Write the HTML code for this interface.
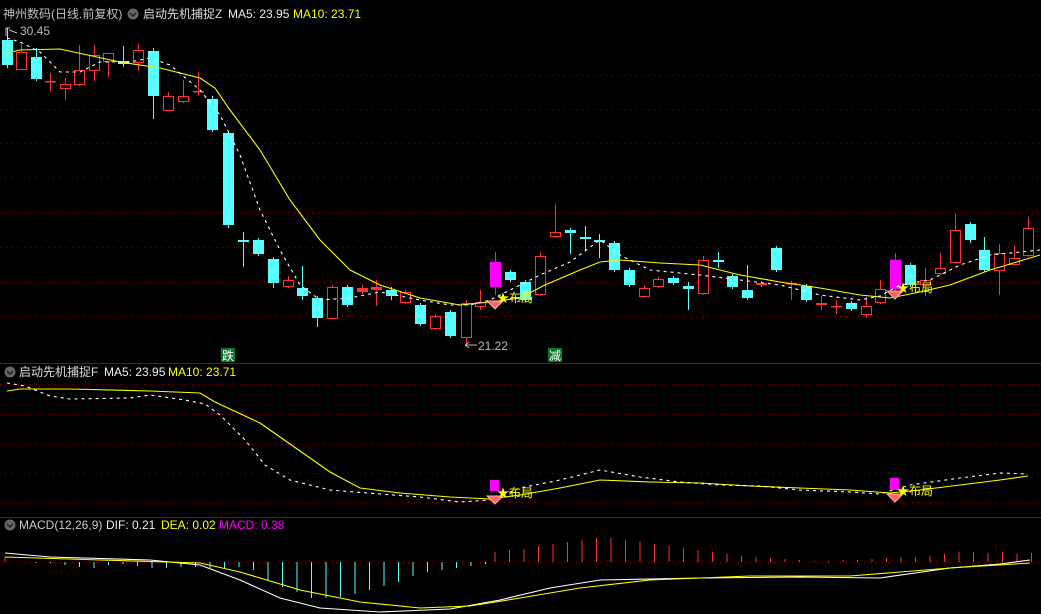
<!DOCTYPE html>
<html><head><meta charset="utf-8"><style>
html,body{margin:0;padding:0;background:#000;width:1041px;height:614px;overflow:hidden}
svg{display:block}
text{font-family:"Liberation Sans","Noto Sans CJK SC",sans-serif;font-size:12px}
</style></head><body>
<svg id="s" width="1041" height="614" xmlns="http://www.w3.org/2000/svg">
<g id="grid"></g>
<line x1="0" y1="363.5" x2="1041" y2="363.5" stroke="#a00000" stroke-width="1"/>
<line x1="0" y1="517.5" x2="1041" y2="517.5" stroke="#a00000" stroke-width="1"/>
<g id="c"></g>
<g id="l"></g>
<text x="3" y="18" fill="#c0c0c0">神州数码(日线.前复权)</text>
<circle cx="133" cy="14" r="5.5" fill="#666"/><path d="M130 13l3 3 3-3" stroke="#222" fill="none" stroke-width="1.5"/>
<text x="143" y="18" fill="#ddd">启动先机捕捉Z</text>
<text x="228" y="18" fill="#eee">MA5: 23.95</text>
<text x="293" y="18" fill="#ff0">MA10: 23.71</text>
<text x="20" y="35" fill="#bbb">30.45</text>
<path d="M6 36v-8h4M9 30l8 3" stroke="#bbb" fill="none"/>
<text x="478" y="350" fill="#bbb">21.22</text>
<path d="M465 345h12M465 345l4-3M465 345l4 3" stroke="#bbb" fill="none"/>
<rect x="221" y="348" width="14" height="14" fill="#0a7a2a"/><text x="222" y="360" fill="#fff">跌</text>
<rect x="548" y="348" width="14" height="14" fill="#0a7a2a"/><text x="549" y="360" fill="#fff">减</text>
<circle cx="10" cy="372" r="5.5" fill="#666"/><path d="M7 371l3 3 3-3" stroke="#222" fill="none" stroke-width="1.5"/>
<text x="19" y="376" fill="#ddd">启动先机捕捉F</text>
<text x="104" y="376" fill="#eee">MA5: 23.95</text>
<text x="168" y="376" fill="#ff0">MA10: 23.71</text>
<circle cx="10" cy="525" r="5.5" fill="#666"/><path d="M7 524l3 3 3-3" stroke="#222" fill="none" stroke-width="1.5"/>
<text x="19" y="529" fill="#ccc">MACD(12,26,9)</text>
<text x="106" y="529" fill="#eee">DIF: 0.21</text>
<text x="161" y="529" fill="#ff0">DEA: 0.02</text>
<text x="219" y="529" fill="#f0f">MACD: 0.38</text>
</svg>
<script>
var ns="http://www.w3.org/2000/svg";
function el(p,t,a){var e=document.createElementNS(ns,t);for(var k in a)e.setAttribute(k,a[k]);document.getElementById(p).appendChild(e);return e;}
[75,109,143,177,212,247,282,316,384,414,444,473,502,562].forEach(function(y){el("grid","line",{x1:0,x2:1041,y1:y+.5,y2:y+.5,stroke:"#a00000","stroke-dasharray":"1 5"});});
var C=[[7,40,65,28,68,'c'],[21,52,69,44,70,'r'],[36,57,79,48,81,'c'],[50,81,82,73,91,'R'],[65,84,88,78,100,'r'],[79,70,84,45,86,'r'],[94,55,70,45,81,'r'],[108,53,61,54,77,'r'],[123,61,64,46,67,'c'],[138,50,62,44,71,'r'],[153,51,96,48,119,'c'],[168,96,110,92,111,'r'],[183,96,101,80,103,'r'],[198,91,92,72,95,'R'],[212,99,130,96,132,'c'],[228,133,225,131,228,'c'],[243,240,242,232,267,'c'],[258,240,254,238,256,'c'],[273,259,283,257,288,'c'],[288,280,286,276,288,'r'],[302,288,296,266,300,'c'],[317,298,318,296,327,'c'],[332,287,318,285,320,'r'],[347,287,305,285,307,'c'],[362,288,292,285,294,'R'],[376,287,290,280,306,'R'],[391,290,296,287,300,'c'],[405,292,302,290,304,'r'],[420,305,324,303,326,'c'],[435,316,328,314,330,'r'],[450,312,336,310,338,'c'],[466,303,337,300,345,'r'],[480,302,306,290,310,'r'],[495,262,287,252,295,'m'],[510,272,280,270,282,'c'],[525,282,300,280,302,'c'],[540,256,294,252,296,'r'],[555,232,236,204,238,'r'],[570,230,233,228,254,'c'],[585,237,239,226,250,'c'],[599,240,242,234,258,'c'],[614,243,270,241,272,'c'],[629,270,285,268,287,'c'],[644,288,296,286,298,'r'],[658,279,286,277,288,'r'],[673,278,283,276,285,'c'],[688,286,289,282,310,'c'],[703,260,293,256,295,'r'],[718,260,262,252,268,'c'],[732,276,287,274,289,'c'],[747,290,298,265,300,'c'],[761,283,285,281,287,'R'],[776,248,270,246,272,'c'],[791,283,284,281,300,'R'],[806,286,300,284,302,'c'],[821,303,305,296,310,'R'],[836,306,307,300,314,'R'],[851,303,309,301,311,'c'],[866,306,314,297,318,'r'],[880,289,302,280,304,'r'],[895,260,289,253,291,'m'],[910,265,285,263,287,'c'],[925,280,284,268,296,'r'],[940,268,273,253,275,'r'],[955,230,262,214,264,'r'],[970,224,240,222,243,'c'],[984,250,270,237,272,'c'],[999,253,270,244,295,'r'],[1014,258,264,246,266,'r'],[1028,228,255,217,257,'r']];
C.forEach(function(d){var x=d[0],t=d[5],col=t=='c'?'#55ffff':t=='m'?'#ff00ff':'#ff3333';
el("c","line",{x1:x+.5,x2:x+.5,y1:d[3],y2:d[4],stroke:col});
var y1=Math.min(d[1],d[2]),h=Math.max(Math.abs(d[2]-d[1]),1.5);
if(t=='r')el("c","rect",{x:x-4.5,y:y1+.5,width:10,height:h,fill:"#000",stroke:col});
else el("c","rect",{x:x-5,y:y1,width:11,height:h,fill:col});});
function pl(pts,col,dash){var a={points:pts.map(function(p){return p.join(",")}).join(" "),fill:"none",stroke:col,"stroke-width":1.1};if(dash)a["stroke-dasharray"]="3 4";el("l","polyline",a);}
pl([[7,53],[20,50],[60,49],[120,62],[160,68],[200,78],[215,88],[230,110],[260,150],[290,200],[320,240],[350,270],[380,285],[420,298],[460,305],[490,302],[520,298],[545,285],[580,270],[600,262],[620,260],[660,263],[700,265],[740,275],[780,282],[820,288],[860,295],[890,298],[920,292],[950,285],[990,270],[1040,255]],"#ffff00");
pl([[7,38],[20,42],[40,52],[60,72],[80,72],[100,62],[130,62],[150,58],[170,65],[200,90],[220,115],[240,155],[260,210],[280,250],[300,285],[320,300],[350,298],[380,292],[420,300],[450,305],[470,305],[490,300],[510,290],[540,275],[570,262],[600,240],[620,255],[650,270],[700,275],[740,280],[780,285],[820,295],[860,300],[880,296],[900,285],[930,280],[960,265],[990,255],[1040,250]],"#ffffff",1);
pl([[7,391],[20,389],[70,389],[150,391],[200,393],[215,402],[260,423],[300,451],[330,472],[360,488],[400,493],[450,497],[490,499],[520,495],[560,488],[600,480],[650,482],[700,483],[750,486],[800,488],[850,490],[890,493],[920,490],[960,485],[1000,480],[1028,476]],"#ffff00");
pl([[7,383],[25,386],[50,396],[70,399],[130,398],[150,395],[185,400],[205,404],[220,415],[245,440],[265,465],[290,480],[330,490],[380,494],[420,497],[460,502],[490,500],[520,488],[560,480],[600,470],[640,477],[680,482],[720,485],[760,486],[800,490],[850,492],[880,494],[910,485],[960,478],[1000,473],[1028,474]],"#ffffff",1);
var neg=[1,1,3,5,6,3,2,4,6,6,5,5,6,6,5,8,18,25,30,36,36,35,32,28,24,20,14,10,8,6,4,2];
for(var i=0;i<32;i++){var x=36+i*14.5;el("l","line",{x1:x,x2:x,y1:562,y2:562+neg[i],stroke:"#55ffff"});}
var pos=[10,12,13,16,18,20,22,24,24,22,20,18,16,14,12,10,8,6,5,4,3,2,1,1,2,2,3,4,5,5,6,8,10,10,9,10,8,9];
for(var i=0;i<pos.length;i++){var x=495+i*14.5;el("l","line",{x1:x,x2:x,y1:562,y2:562-pos[i],stroke:"#ff3333"});}
el("l","line",{x1:5,x2:5,y1:557,y2:562,stroke:"#ff3333"});
pl([[5,553],[50,557],[150,560],[200,565],[240,580],[280,598],[320,608],[380,612],[450,609],[500,600],[550,588],[600,580],[700,578],[800,577],[880,578],[950,568],[1000,564],[1030,560]],"#ffffff");
pl([[5,557],[100,560],[200,563],[240,572],[300,590],[360,602],[420,608],[470,606],[520,598],[580,588],[650,580],[750,576],[850,576],[950,568],[1030,563]],"#ffff00");
function sig(x,y,bx,by,bh){if(bh)el("l","rect",{x:bx,y:by,width:9,height:bh,fill:"#ff00ff"});
el("l","path",{d:"M"+(x-8)+" "+y+"h16l-8 8z",fill:"#ff6666",stroke:"#ffaaaa"});
var t=el("l","text",{x:x+2,y:y+1,fill:"#ffff00"});t.textContent="★布局";}
sig(495,301,0,0,0);sig(895,291,0,0,0);
sig(495,496,490,480,11);sig(895,494,890,478,12);
</script>
</body></html>
